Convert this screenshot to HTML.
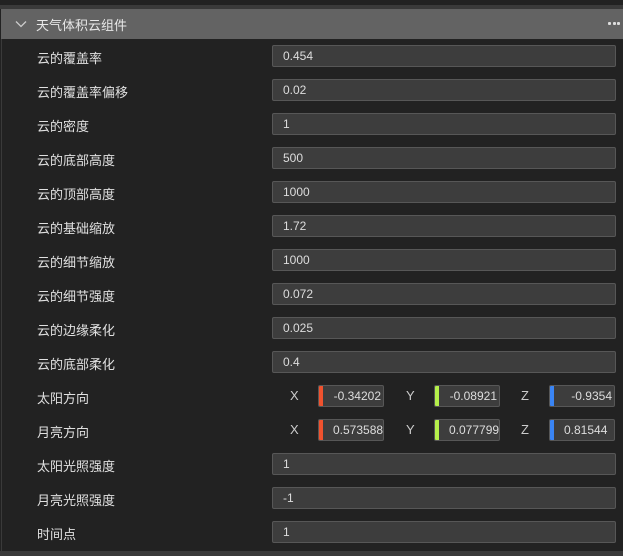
<!DOCTYPE html>
<html><head><meta charset="utf-8"><style>
*{margin:0;padding:0;box-sizing:border-box}
body{width:623px;height:556px;background:#222;font-family:"Liberation Sans","Noto Sans CJK SC",sans-serif;color:#ddd;position:relative;overflow:hidden}
.top{position:absolute;left:0;top:5px;width:623px;height:4px;background:#3a3a3a}
.hdr{position:absolute;left:1px;top:9px;width:622px;height:30px;background:#636363;}
.hdr .t{position:absolute;left:35px;top:6px;font-size:13px;color:#e8e8e8}
.hdr svg{position:absolute;left:14px;top:11px}
.dots{position:absolute;right:3px;top:13px;font-size:0}
.dots i{display:inline-block;width:3px;height:3px;background:#ddd;margin-left:1.5px;border-radius:1px}
.lb{position:absolute;left:1px;top:39px;width:1px;height:512px;background:#3a3a3a}
.bot{position:absolute;left:0;top:551px;width:623px;height:5px;background:#3a3a3a}
.row{position:absolute;left:0;width:623px;height:22px}
.row .l{position:absolute;left:37px;top:3px;font-size:13px;color:#e0e0e0}
.in{position:absolute;left:272px;width:344px;top:0;height:22px;background:#3d3d3d;border:1px solid #575757;border-radius:2px;font-size:12px;color:#ddd;padding:3px 0 0 10px}
.ax{position:absolute;top:3px;font-size:13px;color:#ccc}
.v{position:absolute;top:0;height:22px;width:66px;background:#3d3d3d;border:1px solid #575757;border-radius:2px;font-size:12px;color:#ddd;overflow:hidden;white-space:nowrap;text-align:right;padding:3px 2px 0 0}
.v.n{text-align:left;padding-left:14px}
.v b{position:absolute;left:0;top:0;width:4px;height:20px}
</style></head><body>
<div class="top"></div>
<div class="hdr"><svg width="12" height="8" viewBox="0 0 12 8"><path d="M1 1.5L6 6.5L11 1.5" stroke="#ccc" stroke-width="1.3" fill="none"/></svg><span class="t">天气体积云组件</span><span class="dots"><i></i><i></i><i></i></span></div>
<div class="lb"></div>
<div class="row" style="top:45px"><span class="l">云的覆盖率</span><div class="in">0.454</div></div>
<div class="row" style="top:79px"><span class="l">云的覆盖率偏移</span><div class="in">0.02</div></div>
<div class="row" style="top:113px"><span class="l">云的密度</span><div class="in">1</div></div>
<div class="row" style="top:147px"><span class="l">云的底部高度</span><div class="in">500</div></div>
<div class="row" style="top:181px"><span class="l">云的顶部高度</span><div class="in">1000</div></div>
<div class="row" style="top:215px"><span class="l">云的基础缩放</span><div class="in">1.72</div></div>
<div class="row" style="top:249px"><span class="l">云的细节缩放</span><div class="in">1000</div></div>
<div class="row" style="top:283px"><span class="l">云的细节强度</span><div class="in">0.072</div></div>
<div class="row" style="top:317px"><span class="l">云的边缘柔化</span><div class="in">0.025</div></div>
<div class="row" style="top:351px"><span class="l">云的底部柔化</span><div class="in">0.4</div></div>
<div class="row" style="top:385px"><span class="l">太阳方向</span>
<span class="ax" style="left:290px">X</span><div class="v" style="left:318px"><b style="background:#f0522e"></b>-0.34202</div>
<span class="ax" style="left:406px">Y</span><div class="v" style="left:434px"><b style="background:#b5f04a"></b>-0.08921</div>
<span class="ax" style="left:521px">Z</span><div class="v" style="left:549px"><b style="background:#3a85f5"></b>-0.9354</div></div>
<div class="row" style="top:419px"><span class="l">月亮方向</span>
<span class="ax" style="left:290px">X</span><div class="v n" style="left:318px"><b style="background:#f0522e"></b>0.573588</div>
<span class="ax" style="left:406px">Y</span><div class="v n" style="left:434px"><b style="background:#b5f04a"></b>0.077799</div>
<span class="ax" style="left:521px">Z</span><div class="v n" style="left:549px"><b style="background:#3a85f5"></b>0.81544</div></div>
<div class="row" style="top:453px"><span class="l">太阳光照强度</span><div class="in">1</div></div>
<div class="row" style="top:487px"><span class="l">月亮光照强度</span><div class="in">-1</div></div>
<div class="row" style="top:521px"><span class="l">时间点</span><div class="in">1</div></div>
<div class="bot"></div>
</body></html>
